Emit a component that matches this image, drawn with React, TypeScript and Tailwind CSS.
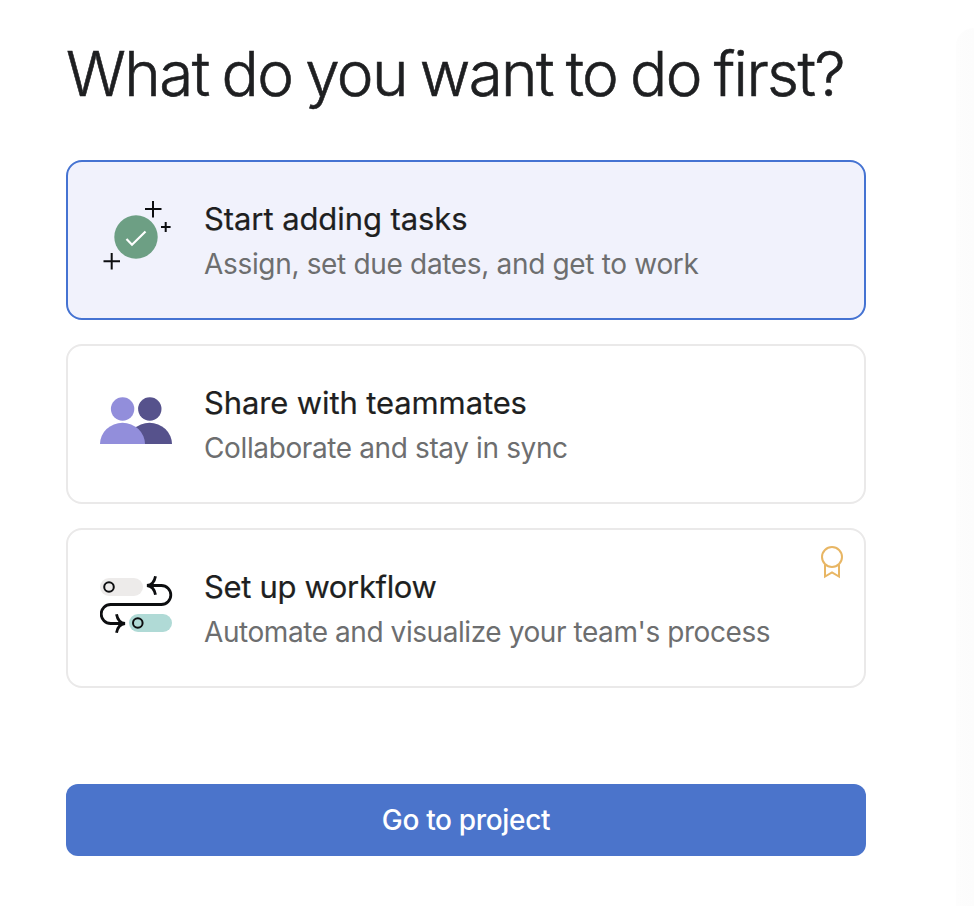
import type { ReactNode } from "react";

function TasksIcon() {
  return (
    <svg width="72" height="72" viewBox="0 0 72 72" fill="none">
      <circle cx="36" cy="37" r="21.7" fill="#6D9F84" />
      <path d="M26.5 39l5.5 5.7L45.5 31.5" stroke="#fff" strokeWidth="2.2" />
      <path d="M53 1v16.5M45 9h16.5M65.7 22v10M61 27h9.6M11.7 53v16.5M3.5 61.3H20" stroke="#0d0e10" strokeWidth="2" />
    </svg>
  );
}

function TeamIcon() {
  return (
    <svg width="72" height="72" viewBox="0 0 72 72" fill="none">
      <circle cx="49.8" cy="25" r="11.7" fill="#56528C" />
      <path d="M27 60a22.5 21.2 0 0 1 45 0z" fill="#56528C" />
      <circle cx="22.6" cy="25" r="11.7" fill="#928EDB" />
      <path d="M0 60a22.5 21.2 0 0 1 45 0z" fill="#928EDB" />
    </svg>
  );
}

function WorkflowIcon() {
  return (
    <svg width="74" height="72" viewBox="0 0 74 72" fill="none">
      <rect x="0" y="10" width="43" height="18" rx="9" fill="#EDEBEA" />
      <rect x="29" y="46" width="43" height="18" rx="9" fill="#B0DAD6" />
      <g stroke="#0d0e10" strokeWidth="2">
        <circle cx="9" cy="19" r="4.8" />
        <circle cx="37.8" cy="55" r="4.8" />
      </g>
      <path
        d="M48 17.5H61.3a9.5 9.5 0 0 1 0 19H10.7a9.5 9.5 0 0 0 0 19H24M55.5 8.2C54.5 13.5 52 17 47 17.5C52 18 54.5 21.5 55.5 26.8M16.5 46.2C17.5 51.5 20 55 25 55.5C20 56 17.5 59.5 16.5 64.8"
        stroke="#0d0e10"
        strokeWidth="2.8"
      />
    </svg>
  );
}

function RibbonIcon() {
  return (
    <svg width="24" height="34" viewBox="0 0 24 34" fill="none" stroke="#E8B664" strokeWidth="2">
      <circle cx="12" cy="12" r="10" />
      <path d="M5 19.5V31.5L12 27.5L19 31.5V19.5" />
    </svg>
  );
}

type OptionProps = {
  icon: ReactNode;
  title: string;
  titleClass: string;
  text: string;
  textClass: string;
  selected?: boolean;
  badge?: ReactNode;
};

function Option({ icon, title, titleClass, text, textClass, selected, badge }: OptionProps) {
  return (
    <button
      type="button"
      className={`relative flex h-40 w-full items-center rounded-2xl border-2 pl-8 text-left ${
        selected ? "border-[#4573D2] bg-[#F1F2FC]" : "border-[#EAE9E9] bg-white"
      }`}
    >
      <span className="w-[104px] shrink-0 pb-2">{icon}</span>
      <span className="flex flex-col whitespace-nowrap">
        <span
          className={`text-[31px] leading-[48px] text-[#1E1F21] [-webkit-text-stroke:0.2px_#1E1F21] ${titleClass}`}
        >
          {title}
        </span>
        <span className={`text-[28px] leading-[43px] text-[#6D6E6F] ${textClass}`}>{text}</span>
      </span>
      {badge && <span className="absolute top-[15px] right-5">{badge}</span>}
    </button>
  );
}

export default function App() {
  return (
    <div className="flex h-[906px] w-[974px] justify-between overflow-hidden bg-white font-['Inter','Liberation_Sans',sans-serif]">
      <main className="ml-[66px] w-[800px]">
        <h1 className="mt-[34px] h-20 text-[62px] leading-[80px] font-light tracking-[-1.6px] whitespace-nowrap text-[#1E1F21] [word-spacing:-3px] [-webkit-text-stroke:0.6px_#1E1F21]">
          What do you want to do first?
        </h1>
        <div className="mt-[46px] flex flex-col gap-6">
          <Option
            selected
            icon={<TasksIcon />}
            title="Start adding tasks"
            titleClass="tracking-[-0.08px]"
            text="Assign, set due dates, and get to work"
            textClass="tracking-[-0.33px]"
          />
          <Option
            icon={<TeamIcon />}
            title="Share with teammates"
            titleClass="tracking-[-0.12px]"
            text="Collaborate and stay in sync"
            textClass="tracking-[-0.38px]"
          />
          <Option
            icon={<WorkflowIcon />}
            title="Set up workflow"
            titleClass="tracking-[-0.35px]"
            text="Automate and visualize your team's process"
            textClass="tracking-[-0.43px]"
            badge={<RibbonIcon />}
          />
        </div>
        <button
          type="button"
          className="mt-24 h-[72px] w-full rounded-xl bg-[#4B74CB] pt-px text-[28px] leading-[71px] font-medium tracking-[-0.33px] text-white"
        >
          Go to project
        </button>
      </main>
      <div className="mt-7 w-[18px] rounded-tl-[40px] bg-linear-to-r from-[#FDFDFD] to-[#FCFCFC]" />
    </div>
  );
}
